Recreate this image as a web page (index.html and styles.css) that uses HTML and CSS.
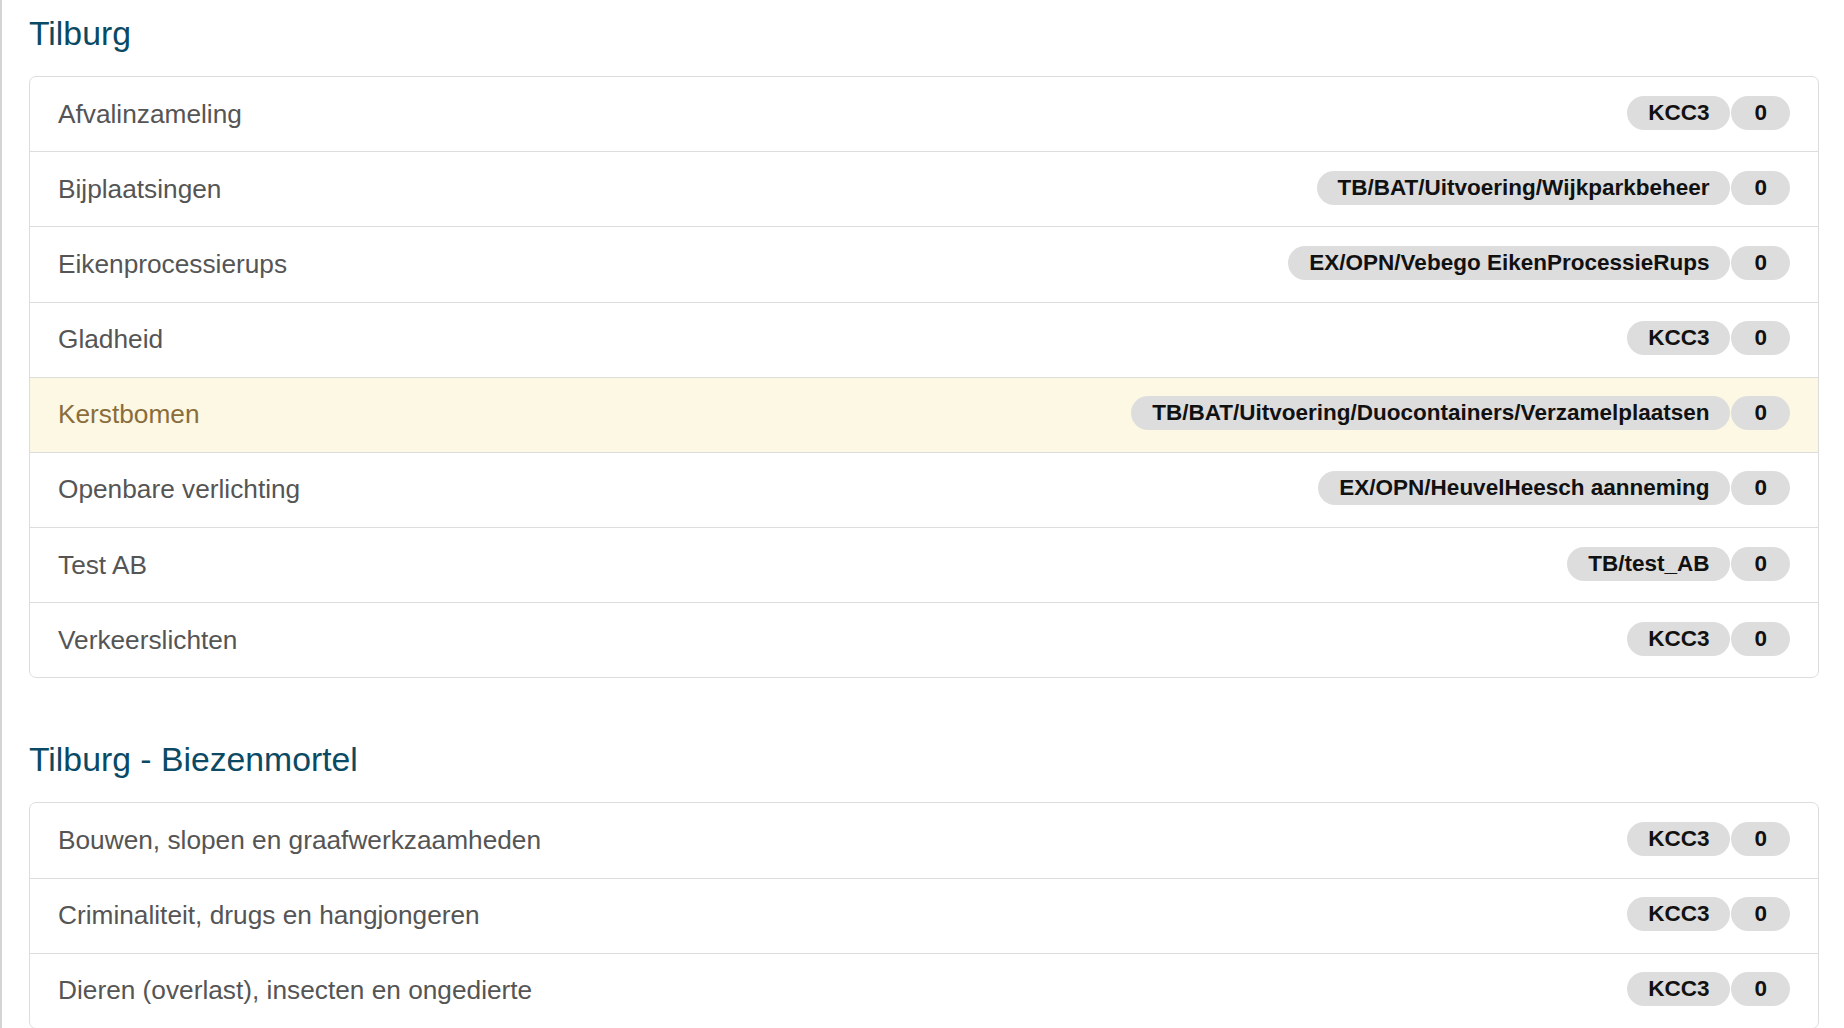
FILE: index.html
```html
<!DOCTYPE html>
<html lang="nl">
<head>
<meta charset="utf-8">
<title>Categorieën</title>
<link rel="stylesheet" href="styles.css">
</head>
<body>
<div class="page">
  <section class="group">
    <h2 class="group-title">Tilburg</h2>
    <div class="list">
      <div class="item"><span class="label">Afvalinzameling</span><span class="badges"><span class="badge">KCC3</span><span class="badge count">0</span></span></div>
      <div class="item"><span class="label">Bijplaatsingen</span><span class="badges"><span class="badge">TB/BAT/Uitvoering/Wijkparkbeheer</span><span class="badge count">0</span></span></div>
      <div class="item"><span class="label">Eikenprocessierups</span><span class="badges"><span class="badge">EX/OPN/Vebego EikenProcessieRups</span><span class="badge count">0</span></span></div>
      <div class="item"><span class="label">Gladheid</span><span class="badges"><span class="badge">KCC3</span><span class="badge count">0</span></span></div>
      <div class="item warning"><span class="label">Kerstbomen</span><span class="badges"><span class="badge">TB/BAT/Uitvoering/Duocontainers/Verzamelplaatsen</span><span class="badge count">0</span></span></div>
      <div class="item"><span class="label">Openbare verlichting</span><span class="badges"><span class="badge">EX/OPN/HeuvelHeesch aanneming</span><span class="badge count">0</span></span></div>
      <div class="item"><span class="label">Test AB</span><span class="badges"><span class="badge">TB/test_AB</span><span class="badge count">0</span></span></div>
      <div class="item"><span class="label">Verkeerslichten</span><span class="badges"><span class="badge">KCC3</span><span class="badge count">0</span></span></div>
    </div>
  </section>
  <section class="group">
    <h2 class="group-title">Tilburg - Biezenmortel</h2>
    <div class="list">
      <div class="item"><span class="label">Bouwen, slopen en graafwerkzaamheden</span><span class="badges"><span class="badge">KCC3</span><span class="badge count">0</span></span></div>
      <div class="item"><span class="label">Criminaliteit, drugs en hangjongeren</span><span class="badges"><span class="badge">KCC3</span><span class="badge count">0</span></span></div>
      <div class="item"><span class="label">Dieren (overlast), insecten en ongedierte</span><span class="badges"><span class="badge">KCC3</span><span class="badge count">0</span></span></div>
    </div>
  </section>
</div>
</body>
</html>
```

FILE: styles.css
```css
html, body {
  margin: 0;
  padding: 0;
  background: #fff;
}

body {
  font-family: "Liberation Sans", Arial, sans-serif;
  color: #555;
}

.page {
  border-left: 2px solid #d4d4d4;
  min-height: 100vh;
  padding: 15px 25px 0 27px;
  box-sizing: border-box;
}

.group {
  margin-bottom: 63px;
}

.group-title {
  margin: 0 0 24px;
  font-size: 33.75px;
  line-height: 1.1;
  font-weight: normal;
  color: #0a4a64;
}

.list {
  border: 1px solid #ddd;
  border-radius: 7px;
  overflow: hidden;
}

.item {
  display: flex;
  align-items: center;
  justify-content: space-between;
  height: 74.15px;
  padding: 0 28px;
  border-bottom: 1px solid #ddd;
  font-size: 26.25px;
  color: #555;
}

.item:last-child {
  border-bottom: none;
}

.item.warning {
  background: #fcf8e3;
  color: #8a6d3b;
}

.badges {
  display: flex;
  align-items: center;
  margin-top: -3px;
}

.badge {
  display: inline-block;
  background: #ddd;
  color: #111;
  font-weight: bold;
  font-size: 22.5px;
  line-height: 22px;
  padding: 6px 21px;
  border-radius: 17px;
}

.badge.count {
  margin-left: 1px;
  padding: 6px 23px;
}
```
